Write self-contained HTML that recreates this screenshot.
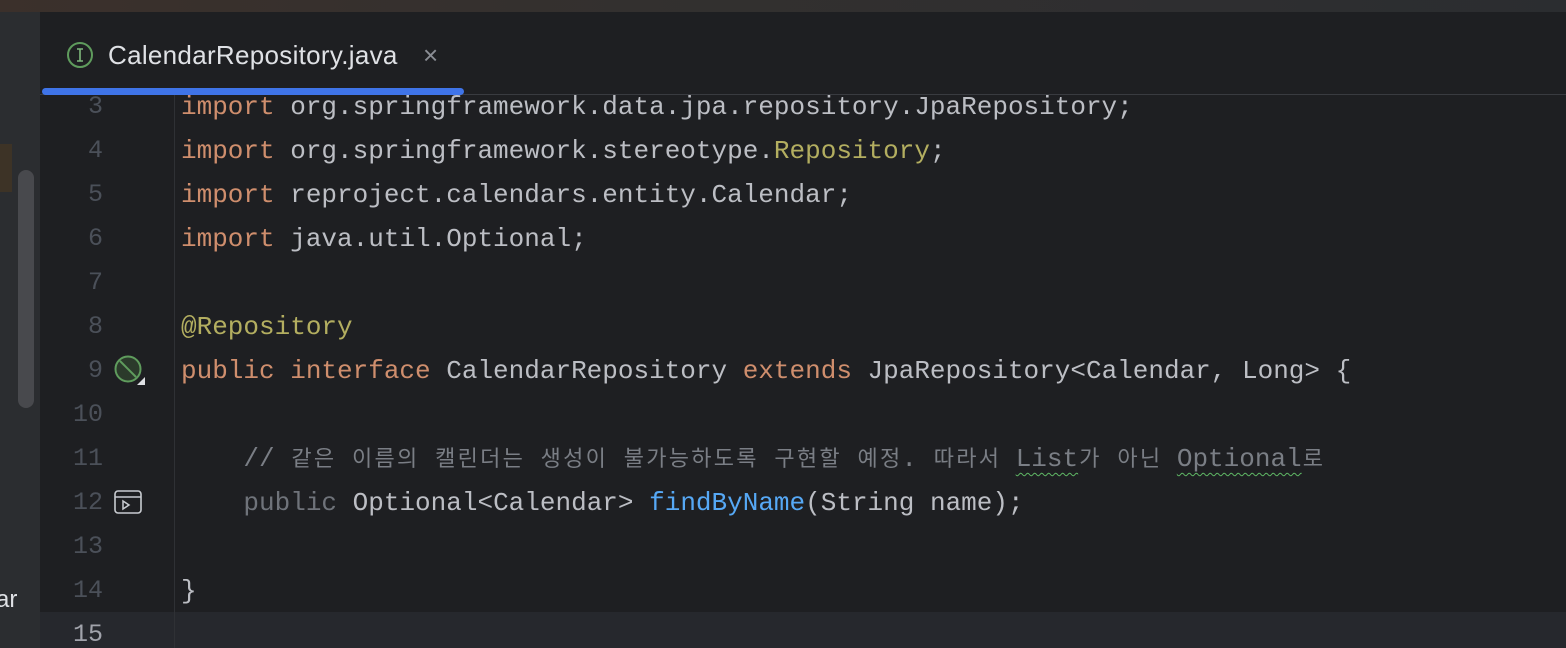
<!DOCTYPE html>
<html><head><meta charset="utf-8"><style>
*{margin:0;padding:0;box-sizing:border-box}
html,body{width:1566px;height:648px;overflow:hidden}
body{background:#1e1f22;position:relative;font-family:"Liberation Mono","Noto Sans CJK KR",monospace}
.top{position:absolute;left:0;top:0;width:1566px;height:12px;background:linear-gradient(90deg,#3b302b,#33302f 40%,#2b2d30)}
.left{position:absolute;left:0;top:12px;width:40px;height:636px;background:#2b2d30}
.acc{position:absolute;left:0;top:132px;width:12px;height:48px;background:#3d3326}
.sb{position:absolute;left:18px;top:158px;width:16px;height:238px;border-radius:8px;background:#48494d}
.ar{position:absolute;left:-4px;top:586px;font:24px "Liberation Sans",sans-serif;color:#dfe1e5}
.tabline{position:absolute;left:40px;top:94px;width:1526px;height:1px;background:#393b40}
.blue{position:absolute;left:42px;top:88px;width:422px;height:7px;border-radius:4px;background:#3f74e8}
.tab{position:absolute;left:108px;top:40px;font:26px "Liberation Sans",sans-serif;letter-spacing:0.3px;color:#dfe1e5}
.x{position:absolute;left:423px;top:40px;font:26px "Liberation Sans",sans-serif;color:#8a8d94}
.sep{position:absolute;left:174px;top:95px;width:1px;height:553px;background:#2f3135}
.hl{position:absolute;left:40px;top:612px;width:1526px;height:36px;background:#26282d}
.ln{position:absolute;left:40px;width:63px;text-align:right;font-size:25px;line-height:44px;color:#4b5059}
.c{position:absolute;left:181px;font-size:26px;line-height:44px;color:#bcbec4;white-space:pre}
.k{color:#cf8e6d}.a{color:#b3ae60}.f{color:#56a8f5}.cm{color:#7a7e85}.g{color:#6f737a}
.h{display:inline-block;width:22.5px;text-align:center;font-size:22px}
.w{text-decoration:underline wavy #5fb865;text-decoration-thickness:1px;text-underline-offset:6px}
</style></head><body>
<div class="top"></div>
<div class="left"><div class="acc"></div><div class="sb"></div></div>
<div class="ar">ar</div>
<svg style="position:absolute;left:66px;top:41px" width="28" height="28"><circle cx="14" cy="14" r="12" fill="none" stroke="#5f9c5d" stroke-width="2"/><path d="M11 8h6M14 8v12M11 20h6" stroke="#7fb87d" stroke-width="1.6" fill="none"/></svg>
<div class="tab">CalendarRepository.java</div>
<div class="x">×</div>
<div class="tabline"></div>
<div class="blue"></div>
<div class="hl"></div>
<div class="sep"></div>
<svg style="position:absolute;left:112px;top:354px" width="36" height="32"><circle cx="16" cy="15" r="12.5" fill="#2b3a2b" stroke="#5f9c5d" stroke-width="2"/><path d="M8 7L24 23" stroke="#5f9c5d" stroke-width="2"/><path d="M33 23v8h-8z" fill="#dfe1e5"/></svg>
<svg style="position:absolute;left:114px;top:490px" width="28" height="24"><rect x="1" y="1" width="26" height="22" rx="3" fill="none" stroke="#c9ccd1" stroke-width="1.6"/><path d="M1 7h26" stroke="#c9ccd1" stroke-width="1.6"/><path d="M9 11v8l6-4z" fill="none" stroke="#c9ccd1" stroke-width="1.5"/></svg>

<div class="ln" style="top:85px">3</div>
<div class="ln" style="top:129px">4</div>
<div class="ln" style="top:173px">5</div>
<div class="ln" style="top:217px">6</div>
<div class="ln" style="top:261px">7</div>
<div class="ln" style="top:305px">8</div>
<div class="ln" style="top:349px">9</div>
<div class="ln" style="top:393px">10</div>
<div class="ln" style="top:437px">11</div>
<div class="ln" style="top:481px">12</div>
<div class="ln" style="top:525px">13</div>
<div class="ln" style="top:569px">14</div>
<div class="ln" style="top:613px;color:#a1a3ab">15</div>

<div class="c" style="top:85px"><span class="k">import</span> org.springframework.data.jpa.repository.JpaRepository;</div>
<div class="c" style="top:129px"><span class="k">import</span> org.springframework.stereotype.<span class="a">Repository</span>;</div>
<div class="c" style="top:173px"><span class="k">import</span> reproject.calendars.entity.Calendar;</div>
<div class="c" style="top:217px"><span class="k">import</span> java.util.Optional;</div>
<div class="c" style="top:305px"><span class="a">@Repository</span></div>
<div class="c" style="top:349px"><span class="k">public interface</span> CalendarRepository <span class="k">extends</span> JpaRepository&lt;Calendar, Long&gt; {</div>
<div class="c cm" style="top:437px">    // <span class="h">같</span><span class="h">은</span> <span class="h">이</span><span class="h">름</span><span class="h">의</span> <span class="h">캘</span><span class="h">린</span><span class="h">더</span><span class="h">는</span> <span class="h">생</span><span class="h">성</span><span class="h">이</span> <span class="h">불</span><span class="h">가</span><span class="h">능</span><span class="h">하</span><span class="h">도</span><span class="h">록</span> <span class="h">구</span><span class="h">현</span><span class="h">할</span> <span class="h">예</span><span class="h">정</span>. <span class="h">따</span><span class="h">라</span><span class="h">서</span> <span class="w">List<span class="h">가</span></span> <span class="h">아</span><span class="h">닌</span> <span class="w">Optional<span class="h">로</span></span></div>
<div class="c" style="top:481px">    <span class="g">public</span> Optional&lt;Calendar&gt; <span class="f">findByName</span>(String name);</div>
<div class="c" style="top:569px">}</div>
</body></html>
